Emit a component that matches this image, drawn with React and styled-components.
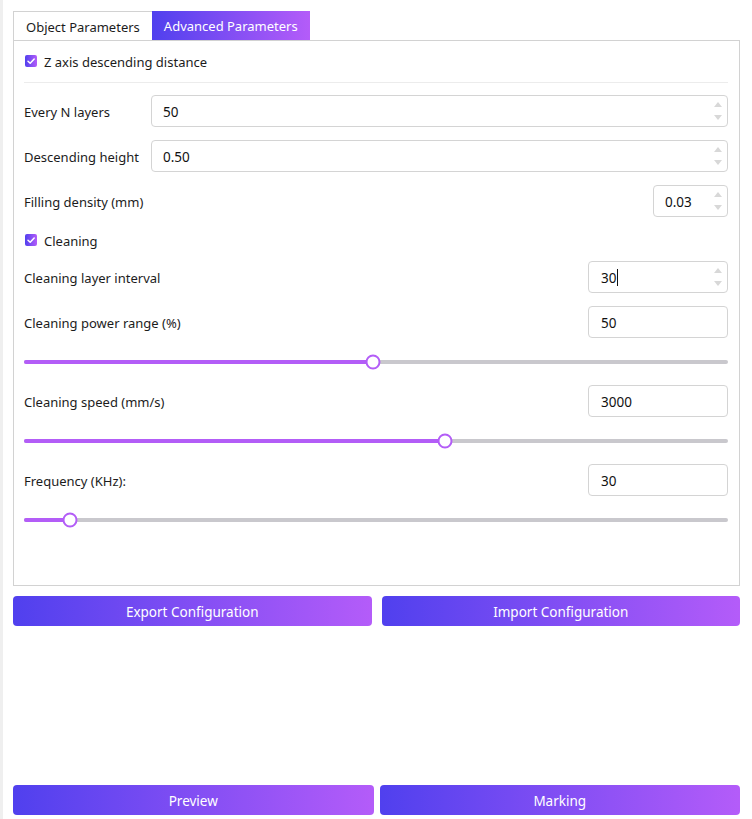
import React from 'react';
import styled, { createGlobalStyle } from 'styled-components';

const Global = createGlobalStyle`
  html, body { margin: 0; padding: 0; background: #fff; }
  body {
    font-family: "Noto Sans", "Open Sans", sans-serif;
    font-size: 13px;
    color: #1c1c1c;
  }
  * { box-sizing: border-box; }
`;

const GRADIENT = 'linear-gradient(90deg, #5040ee 0%, #b45cf9 100%)';
const ACCENT = '#b35df7';

const Shell = styled.div`
  display: flex;
  height: 819px;
`;

const Gutter = styled.div`
  flex: none;
  width: 3px;
  background: #efefef;
`;

const Main = styled.div`
  flex: 1;
  min-width: 0;
  display: flex;
  flex-direction: column;
  padding: 11px 12px 4px 10px;
`;

const TabBar = styled.div`
  display: flex;
  height: 29px;
`;

const Tab = styled.div`
  display: flex;
  align-items: center;
  padding: 1px 12px 0;
  font-size: 13px;
  color: ${p => (p.$active ? '#fff' : '#1c1c1c')};
  background: ${p => (p.$active ? GRADIENT : '#fff')};
  border-top: ${p => (p.$active ? 'none' : '1px solid #d2d2d2')};
  border-left: ${p => (p.$active ? 'none' : '1px solid #d2d2d2')};
`;

const Panel = styled.div`
  height: 546px;
  border: 1px solid #d2d2d2;
  padding: 0 11px 0 10px;
  display: flex;
  flex-direction: column;
`;

const CheckRow = styled.label`
  display: flex;
  align-items: center;
  height: 24px;
  margin-top: ${p => p.$top}px;
  gap: 7px;
`;

const CheckText = styled.span`
  padding-top: 1px;
`;

const Box = styled.span`
  flex: none;
  width: 12px;
  height: 12px;
  margin-left: 1px;
  border-radius: 2px;
  background: ${GRADIENT};
  display: flex;
  align-items: center;
  justify-content: center;
`;

const Divider = styled.div`
  height: 1px;
  background: #ececec;
  margin-top: ${p => p.$top}px;
`;

const FieldRow = styled.div`
  display: flex;
  align-items: center;
  height: 32px;
  margin-top: ${p => p.$top}px;
`;

const Label = styled.span`
  flex: ${p => (p.$fixed ? 'none' : '1')};
  width: ${p => (p.$fixed ? '127px' : 'auto')};
  padding-top: 2px;
  white-space: nowrap;
`;

const InputBox = styled.div`
  display: flex;
  align-items: center;
  height: 32px;
  flex: ${p => (p.$width ? 'none' : '1')};
  width: ${p => (p.$width ? `${p.$width}px` : 'auto')};
  border: 1px solid #d4d4d4;
  border-radius: 4px;
  padding-left: ${p => p.$pad || 11}px;
  background: #fff;
`;

const Value = styled.span`
  flex: 1;
  display: flex;
  align-items: center;
  padding-top: 1px;
  font-size: 13.5px;
  color: #111;
`;

const Caret = styled.span`
  display: inline-block;
  width: 1px;
  height: 17px;
  background: #111;
  margin-left: 1px;
`;

const Spinner = styled.div`
  flex: none;
  align-self: stretch;
  width: 16px;
  margin-right: 1px;
  display: flex;
  flex-direction: column;
  align-items: center;
  padding-top: 6px;
  gap: 8px;
`;

const Arrow = styled.span`
  width: 0;
  height: 0;
  border-left: 4px solid transparent;
  border-right: 4px solid transparent;
  ${p => (p.$down ? 'border-top: 5px solid #d8d8d8;' : 'border-bottom: 5px solid #d8d8d8;')}
`;

const SliderWrap = styled.div`
  position: relative;
  height: 20px;
  margin-top: ${p => p.$top}px;
  display: flex;
  align-items: center;
`;

const Track = styled.div`
  flex: 1;
  height: 4px;
  background: #c9c8cd;
  border-radius: 2px;
  overflow: hidden;
`;

const Fill = styled.div`
  height: 100%;
  background: ${ACCENT};
`;

const Thumb = styled.span`
  position: absolute;
  top: 50%;
  width: 15px;
  height: 15px;
  border-radius: 50%;
  background: #fff;
  border: 2px solid ${ACCENT};
  transform: translate(-50%, -50%);
`;

const ButtonRow = styled.div`
  display: grid;
  grid-template-columns: 1fr 1fr;
  gap: ${p => p.$gap}px;
  margin-top: ${p => (p.$top === 'auto' ? 'auto' : `${p.$top}px`)};
`;

const GradientButton = styled.button`
  height: 30px;
  border: none;
  border-radius: 4px;
  background: ${GRADIENT};
  color: #fff;
  font-family: inherit;
  font-size: 13.5px;
  padding: 2px 0 0;
  cursor: pointer;
`;

function Check({ top, children }) {
  return (
    <CheckRow $top={top}>
      <Box>
        <svg width="10" height="10" viewBox="0 0 10 10">
          <polyline points="2,5.2 4.2,7.3 8.2,3" fill="none" stroke="#fff" strokeWidth="1.5" strokeLinecap="round" strokeLinejoin="round" />
        </svg>
      </Box>
      <CheckText>{children}</CheckText>
    </CheckRow>
  );
}

function NumberBox({ value, width, spin = true, caret, pad }) {
  return (
    <InputBox $width={width} $pad={pad}>
      <Value>
        {value}
        {caret && <Caret />}
      </Value>
      {spin && (
        <Spinner>
          <Arrow />
          <Arrow $down />
        </Spinner>
      )}
    </InputBox>
  );
}

function Slider({ top, pct }) {
  return (
    <SliderWrap $top={top}>
      <Track>
        <Fill style={{ width: `${pct}%` }} />
      </Track>
      <Thumb style={{ left: `${pct}%` }} />
    </SliderWrap>
  );
}

export default function App() {
  return (
    <>
      <Global />
      <Shell>
        <Gutter />
        <Main>
          <TabBar>
            <Tab>Object Parameters</Tab>
            <Tab $active>Advanced Parameters</Tab>
          </TabBar>
          <Panel>
            <Check top={8}>Z axis descending distance</Check>
            <Divider $top={9} />
            <FieldRow $top={12}>
              <Label $fixed>Every N layers</Label>
              <NumberBox value="50" />
            </FieldRow>
            <FieldRow $top={13}>
              <Label $fixed>Descending height</Label>
              <NumberBox value="0.50" />
            </FieldRow>
            <FieldRow $top={13}>
              <Label>Filling density (mm)</Label>
              <NumberBox value="0.03" width={75} />
            </FieldRow>
            <Check top={11}>Cleaning</Check>
            <FieldRow $top={9}>
              <Label>Cleaning layer interval</Label>
              <NumberBox value="30" width={140} caret pad={12} />
            </FieldRow>
            <FieldRow $top={13}>
              <Label>Cleaning power range (%)</Label>
              <NumberBox value="50" width={140} spin={false} pad={12} />
            </FieldRow>
            <Slider top={14} pct={49.6} />
            <FieldRow $top={13}>
              <Label>Cleaning speed (mm/s)</Label>
              <NumberBox value="3000" width={140} spin={false} pad={12} />
            </FieldRow>
            <Slider top={14} pct={59.8} />
            <FieldRow $top={13}>
              <Label>Frequency (KHz):</Label>
              <NumberBox value="30" width={140} spin={false} pad={12} />
            </FieldRow>
            <Slider top={14} pct={6.5} />
          </Panel>
          <ButtonRow $gap={10} $top={10}>
            <GradientButton>Export Configuration</GradientButton>
            <GradientButton>Import Configuration</GradientButton>
          </ButtonRow>
          <ButtonRow $gap={6} $top="auto">
            <GradientButton>Preview</GradientButton>
            <GradientButton>Marking</GradientButton>
          </ButtonRow>
        </Main>
      </Shell>
    </>
  );
}
